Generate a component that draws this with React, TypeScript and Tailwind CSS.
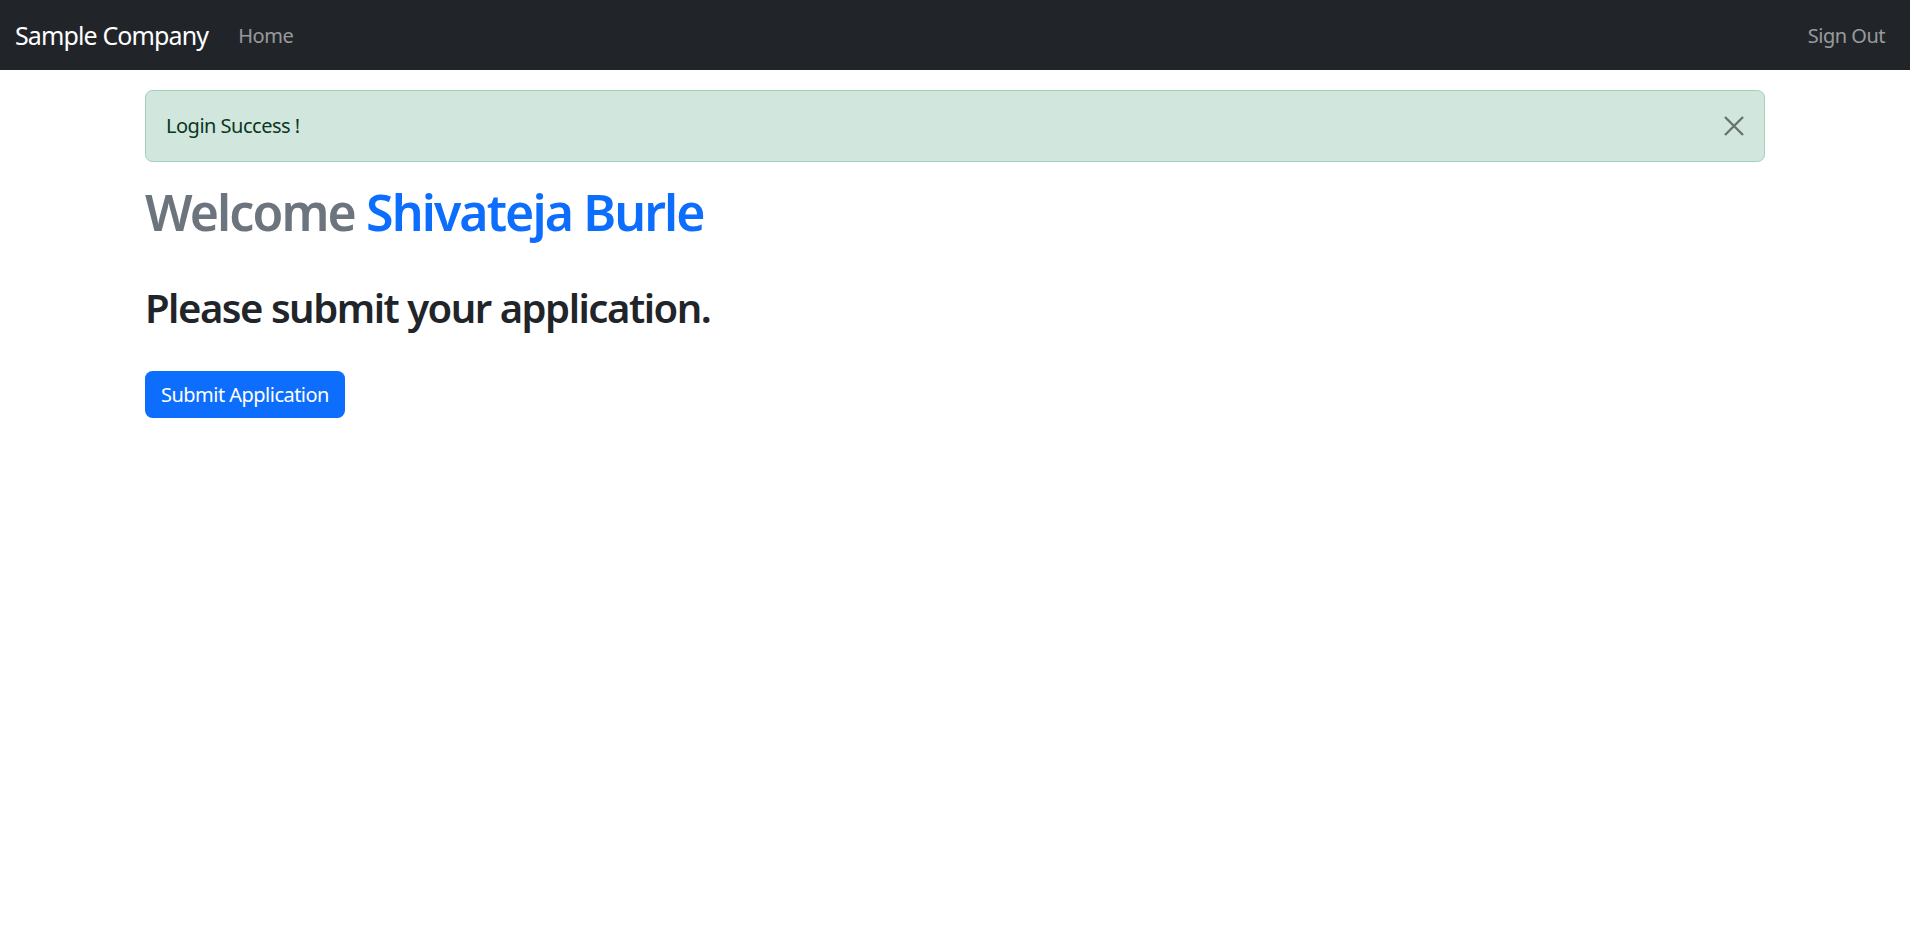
export default function App() {
  return (
    <div className="min-h-screen bg-white font-['Noto_Sans',sans-serif] text-[20px] leading-[1.5] text-[#212529]">
      <nav className="flex h-[70px] items-center justify-between bg-[#212529] px-[15px] pt-[2px]">
        <div className="flex items-center">
          <a href="#" className="mr-[20px] text-[25px] tracking-[-0.035em] text-white">
            Sample Company
          </a>
          <a href="#" className="px-[10px] tracking-[-0.02em] text-[rgba(255,255,255,0.55)]">
            Home
          </a>
        </div>
        <a href="#" className="px-[10px] tracking-[-0.025em] text-[rgba(255,255,255,0.55)]">
          Sign Out
        </a>
      </nav>

      <main className="mx-auto w-[1650px] px-[15px] pt-[20px]">
        <div className="mb-[20px] flex h-[72px] items-center justify-between rounded-[7.5px] border border-[#a3cfbb] bg-[#d1e7dd] px-[20px] text-[#0a3622]">
          <span className="tracking-[-0.025em]">Login Success !</span>
          <button className="opacity-50">
            <svg width="20" height="20" viewBox="0 0 20 20" fill="none" stroke="#000" strokeWidth="2.4">
              <path d="M1 1L19 19M19 1L1 19" />
            </svg>
          </button>
        </div>

        <h1 className="text-[50px] font-semibold leading-[1.2] tracking-[-0.038em] text-[#6c757d]">
          Welcome <span className="text-[#0d6efd]">Shivateja Burle</span>
        </h1>

        <h2 className="mt-[42px] text-[40px] font-semibold leading-[1.2] tracking-[-0.037em]">
          Please submit your application.
        </h2>

        <button className="mt-[39px] h-[47px] rounded-[7.5px] bg-[#0d6efd] px-[16px] tracking-[-0.026em] text-white">
          Submit Application
        </button>
      </main>
    </div>
  );
}
